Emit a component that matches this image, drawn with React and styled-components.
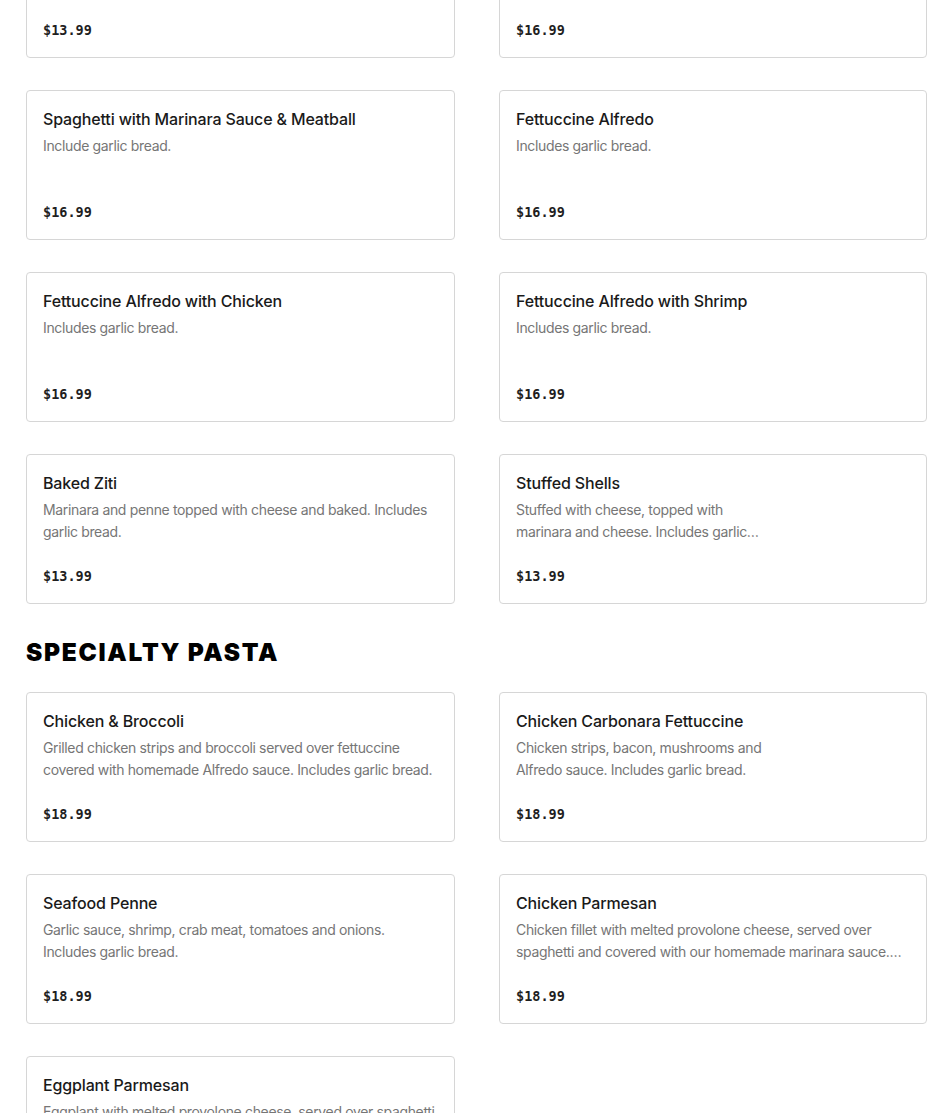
import React from "react";
import styled, { createGlobalStyle } from "styled-components";

const GlobalStyle = createGlobalStyle`
  html, body { margin: 0; padding: 0; background: #ffffff; }
  body { font-family: "Inter", "Liberation Sans", sans-serif; color: #1f1f1f; overflow: hidden; }
  * { box-sizing: border-box; }
`;

const Page = styled.main`
  width: 901px;
  margin: -92px 0 0 26px;
  display: flex;
  flex-direction: column;
`;

const Section = styled.section`
  display: flex;
  flex-direction: column;
`;

const SectionTitle = styled.h2`
  margin: 32px 0 24px;
  font-family: "Inter", "Liberation Sans", sans-serif;
  font-weight: 900;
  font-size: 24.5px;
  line-height: 32px;
  letter-spacing: 1.7px;
  color: #000;
  text-transform: uppercase;
`;

const Grid = styled.div`
  display: grid;
  grid-template-columns: 429px 428px;
  column-gap: 44px;
  row-gap: 32px;
`;

const Card = styled.article`
  display: flex;
  gap: 16px;
  border: 1px solid #d6d6d6;
  border-radius: 4px;
  background: #fff;
  padding: 16px;
`;

const Content = styled.div`
  flex: 1;
  min-width: 0;
  display: flex;
  flex-direction: column;
`;

const ImageSlot = styled.div`
  width: 128px;
  flex-shrink: 0;
`;

const Title = styled.h3`
  margin: 0;
  font-size: 16px;
  line-height: 24px;
  font-weight: 500;
  letter-spacing: -0.15px;
  color: #1a1a1a;
  white-space: nowrap;
`;

const Desc = styled.p`
  margin: 4px 0 0;
  font-size: 14px;
  line-height: 22px;
  letter-spacing: -0.35px;
  min-height: 44px;
  color: #767676;
  display: -webkit-box;
  -webkit-line-clamp: 2;
  -webkit-box-orient: vertical;
  overflow: hidden;
`;

const Price = styled.div`
  margin-top: 22px;
  font-family: "DejaVu Sans Mono", "Liberation Mono", monospace;
  font-weight: 700;
  font-size: 13.5px;
  line-height: 22px;
  color: #1f1f1f;
`;

const pasta = [
  { name: "Spaghetti with Marinara Sauce", desc: "Includes garlic bread.", price: "$13.99" },
  { name: "Spaghetti with Meat Sauce", desc: "Includes garlic bread.", price: "$16.99" },
  { name: "Spaghetti with Marinara Sauce & Meatball", desc: "Include garlic bread.", price: "$16.99" },
  { name: "Fettuccine Alfredo", desc: "Includes garlic bread.", price: "$16.99" },
  { name: "Fettuccine Alfredo with Chicken", desc: "Includes garlic bread.", price: "$16.99" },
  { name: "Fettuccine Alfredo with Shrimp", desc: "Includes garlic bread.", price: "$16.99" },
  { name: "Baked Ziti", desc: "Marinara and penne topped with cheese and baked. Includes garlic bread.", price: "$13.99" },
  { name: "Stuffed Shells", desc: "Stuffed with cheese, topped with marinara and cheese. Includes garlic bread.", price: "$13.99", image: true },
];

const specialty = [
  { name: "Chicken & Broccoli", desc: "Grilled chicken strips and broccoli served over fettuccine covered with homemade Alfredo sauce. Includes garlic bread.", price: "$18.99" },
  { name: "Chicken Carbonara Fettuccine", desc: "Chicken strips, bacon, mushrooms and Alfredo sauce. Includes garlic bread.", price: "$18.99", image: true },
  { name: "Seafood Penne", desc: "Garlic sauce, shrimp, crab meat, tomatoes and onions. Includes garlic bread.", price: "$18.99" },
  { name: "Chicken Parmesan", desc: "Chicken fillet with melted provolone cheese, served over spaghetti and covered with our homemade marinara sauce. Includes garlic bread.", price: "$18.99" },
  { name: "Eggplant Parmesan", desc: "Eggplant with melted provolone cheese, served over spaghetti and covered with our homemade marinara sauce. Includes garlic bread.", price: "$17.99" },
];

function MenuCard({ item }) {
  return (
    <Card>
      <Content>
        <Title>{item.name}</Title>
        <Desc>{item.desc}</Desc>
        <Price>{item.price}</Price>
      </Content>
      {item.image && <ImageSlot />}
    </Card>
  );
}

export default function App() {
  return (
    <>
      <GlobalStyle />
      <Page>
        <Section>
          <Grid>
            {pasta.map((it) => (
              <MenuCard key={it.name} item={it} />
            ))}
          </Grid>
        </Section>
        <Section>
          <SectionTitle>Specialty Pasta</SectionTitle>
          <Grid>
            {specialty.map((it) => (
              <MenuCard key={it.name} item={it} />
            ))}
          </Grid>
        </Section>
      </Page>
    </>
  );
}
